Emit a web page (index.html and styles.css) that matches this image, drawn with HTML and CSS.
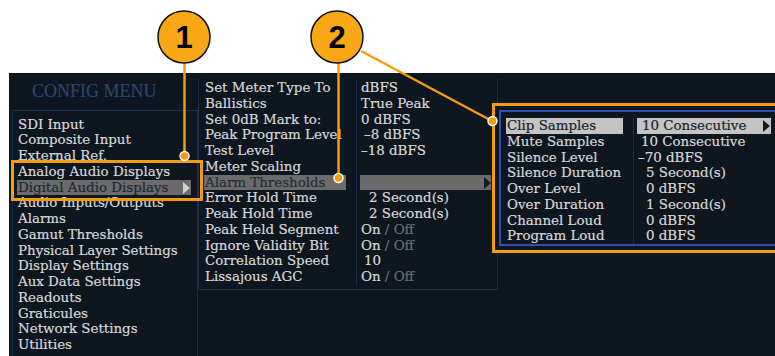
FILE: index.html
```html
<!DOCTYPE html>
<html>
<head>
    <meta charset="utf-8">
    <link rel="stylesheet" href="styles.css">
</head>
<body>
    <div class="screen">
        <div class="config">
            <div class="config-title">CONFIG MENU</div>
            <ul class="menu">
                <li>SDI Input</li>
                <li>Composite Input</li>
                <li>External Ref.</li>
                <li>Analog Audio Displays</li>
                <li class="sel">Digital Audio Displays</li>
                <li>Audio Inputs/Outputs</li>
                <li>Alarms</li>
                <li>Gamut Thresholds</li>
                <li>Physical Layer Settings</li>
                <li>Display Settings</li>
                <li>Aux Data Settings</li>
                <li>Readouts</li>
                <li>Graticules</li>
                <li>Network Settings</li>
                <li>Utilities</li>
            </ul>
        </div>

        <div class="sub">
            <div class="sub-labels">
                <div>Set Meter Type To</div>
                <div>Ballistics</div>
                <div>Set 0dB Mark to:</div>
                <div>Peak Program Level</div>
                <div>Test Level</div>
                <div>Meter Scaling</div>
                <div class="sel">Alarm Thresholds</div>
                <div>Error Hold Time</div>
                <div>Peak Hold Time</div>
                <div>Peak Held Segment</div>
                <div>Ignore Validity Bit</div>
                <div>Correlation Speed</div>
                <div>Lissajous AGC</div>
            </div>
            <div class="sub-values">
                <div>dBFS</div>
                <div>True Peak</div>
                <div>0 dBFS</div>
                <div class="ind1">–8 dBFS</div>
                <div>–18 dBFS</div>
                <div>&nbsp;</div>
                <div class="sel">&nbsp;</div>
                <div class="ind2">2 Second(s)</div>
                <div class="ind2">2 Second(s)</div>
                <div>On <span class="off">/ Off</span></div>
                <div>On <span class="off">/ Off</span></div>
                <div class="ind1">10</div>
                <div>On <span class="off">/ Off</span></div>
            </div>
        </div>
    </div>

    <div class="popup">
        <div class="popup-inner">
            <div class="pop-labels">
                <div class="sel">Clip Samples</div>
                <div>Mute Samples</div>
                <div>Silence Level</div>
                <div>Silence Duration</div>
                <div>Over Level</div>
                <div>Over Duration</div>
                <div>Channel Loud</div>
                <div>Program Loud</div>
            </div>
            <div class="pop-values">
                <div class="sel">10 Consecutive</div>
                <div class="ind1">10 Consecutive</div>
                <div>–70 dBFS</div>
                <div class="ind2">5 Second(s)</div>
                <div class="ind2">0 dBFS</div>
                <div class="ind2">1 Second(s)</div>
                <div class="ind2">0 dBFS</div>
                <div class="ind2">0 dBFS</div>
            </div>
        </div>
    </div>

    <svg class="callouts" width="775" height="356" viewBox="0 0 775 356">
        <rect x="12.5" y="161.5" width="189" height="38" class="frame"/>
        <line x1="184.5" y1="62" x2="184.5" y2="156" class="lead"/>
        <circle cx="184.5" cy="156" r="4.5" class="dot"/>
        <line x1="338.5" y1="62" x2="338.5" y2="178" class="lead"/>
        <circle cx="338.5" cy="178" r="4.5" class="dot"/>
        <line x1="361" y1="51" x2="492" y2="121" class="lead"/>
        <circle cx="492.5" cy="121" r="4.5" class="dot"/>

        <circle cx="184" cy="37" r="26" class="bubble"/>
        <text x="184" y="48" class="num">1</text>
        <circle cx="337" cy="37" r="26" class="bubble"/>
        <text x="337" y="48" class="num">2</text>
    </svg>
</body>
</html>
```

FILE: styles.css
```css
body {
    margin: 0;
    width: 775px;
    height: 356px;
    overflow: hidden;
    position: relative;
    background: #ffffff;
    font-family: "DejaVu Serif", serif;
}

.screen {
    margin: 73px 0 0 9px;
    height: 283px;
    display: flex;
    align-items: flex-start;
    background: #0e1620;
    color: #d8d8d8;
    font-size: 13.4px;
    line-height: 15.75px;
    -webkit-text-stroke: 0.2px;
}

/* left column */

.config {
    width: 189px;
    height: 100%;
    flex: none;
    display: flex;
    flex-direction: column;
}

.config-title {
    height: 37px;
    line-height: 37px;
    padding-left: 23px;
    font-family: "Liberation Serif", serif;
    font-size: 18px;
    color: #2b4868;
}

.menu {
    flex: 1;
    list-style: none;
    margin: 0 0 0 3px;
    padding: 5.5px 6px 0 4px;
    border: 1px solid #1b3050;
    border-bottom: none;
}

.menu li {
    padding-left: 1px;
    white-space: nowrap;
}

.menu li.sel {
    position: relative;
    background: #6b6b6b;
    color: #1d2836;
}

.menu li.sel::after {
    content: "";
    position: absolute;
    right: 1px;
    top: 2px;
    border-left: 7px solid #d0d0d0;
    border-top: 6px solid transparent;
    border-bottom: 6px solid transparent;
}

/* middle column */

.sub {
    width: 298px;
    flex: none;
    margin-top: 6px;
    padding-top: 1px;
    padding-bottom: 4px;
    display: flex;
    border-left: 1px solid #1b3050;
    border-right: 1px solid #1b3050;
    border-bottom: 1px solid #1b3050;
}

.sub-labels {
    width: 152px;
    padding-left: 5px;
    border-right: 1px solid #1b3050;
    white-space: nowrap;
}

.sub-labels div {
    padding-left: 1px;
}

.sub-labels .sel {
    width: 141px;
    background: #6b6b6b;
    color: #222d3a;
}

.sub-values {
    flex: 1;
    padding-left: 3px;
    white-space: nowrap;
}

.sub-values div {
    padding-left: 1px;
}

.sub-values .sel {
    position: relative;
    width: 130px;
    background: #6b6b6b;
}

.sub-values .sel::after {
    content: "";
    position: absolute;
    right: 0;
    top: 2px;
    border-left: 7px solid #151b22;
    border-top: 6px solid transparent;
    border-bottom: 6px solid transparent;
}

.ind1 {
    padding-left: 4px !important;
}

.ind2 {
    padding-left: 9px !important;
}

.off {
    color: #6a6e72;
}

/* pop-up submenu */

.popup {
    position: absolute;
    left: 492px;
    top: 103px;
    width: 300px;
    padding: 4px;
    border: 3px solid #f39c0f;
    background: #0e1620;
    color: #d8d8d8;
    font-size: 13.4px;
    line-height: 15.75px;
    -webkit-text-stroke: 0.2px;
}

.popup-inner {
    height: 126px;
    padding-top: 6px;
    display: flex;
    border: 2px solid #2f4fb5;
}

.pop-labels {
    width: 127px;
    padding-left: 5px;
    border-right: 1px solid #1b3050;
    white-space: nowrap;
}

.pop-labels div {
    padding-left: 1px;
}

.pop-labels .sel {
    width: 116px;
    background: #c4c4c4;
    color: #1a1f2a;
}

.pop-values {
    flex: 1;
    padding-left: 3px;
    white-space: nowrap;
}

.pop-values div {
    padding-left: 1px;
}

.pop-values .sel {
    position: relative;
    width: 129px;
    padding-left: 5px;
    background: #c4c4c4;
    color: #1a1f2a;
}

.pop-values .sel::after {
    content: "";
    position: absolute;
    right: 1px;
    top: 2px;
    border-left: 7px solid #151b22;
    border-top: 6px solid transparent;
    border-bottom: 6px solid transparent;
}

/* callouts */

.callouts {
    position: absolute;
    left: 0;
    top: 0;
    pointer-events: none;
}

.frame {
    fill: none;
    stroke: #f39c0f;
    stroke-width: 3;
}

.lead {
    stroke: #f39c0f;
    stroke-width: 2.5;
}

.dot {
    fill: #f39c0f;
    stroke: #ffffff;
    stroke-width: 1.5;
}

.bubble {
    fill: #f7a814;
    stroke: #111111;
    stroke-width: 1.5;
}

.num {
    font-family: "Liberation Sans Narrow", "Liberation Sans", sans-serif;
    font-weight: bold;
    font-size: 31px;
    text-anchor: middle;
    fill: #000000;
}
```
